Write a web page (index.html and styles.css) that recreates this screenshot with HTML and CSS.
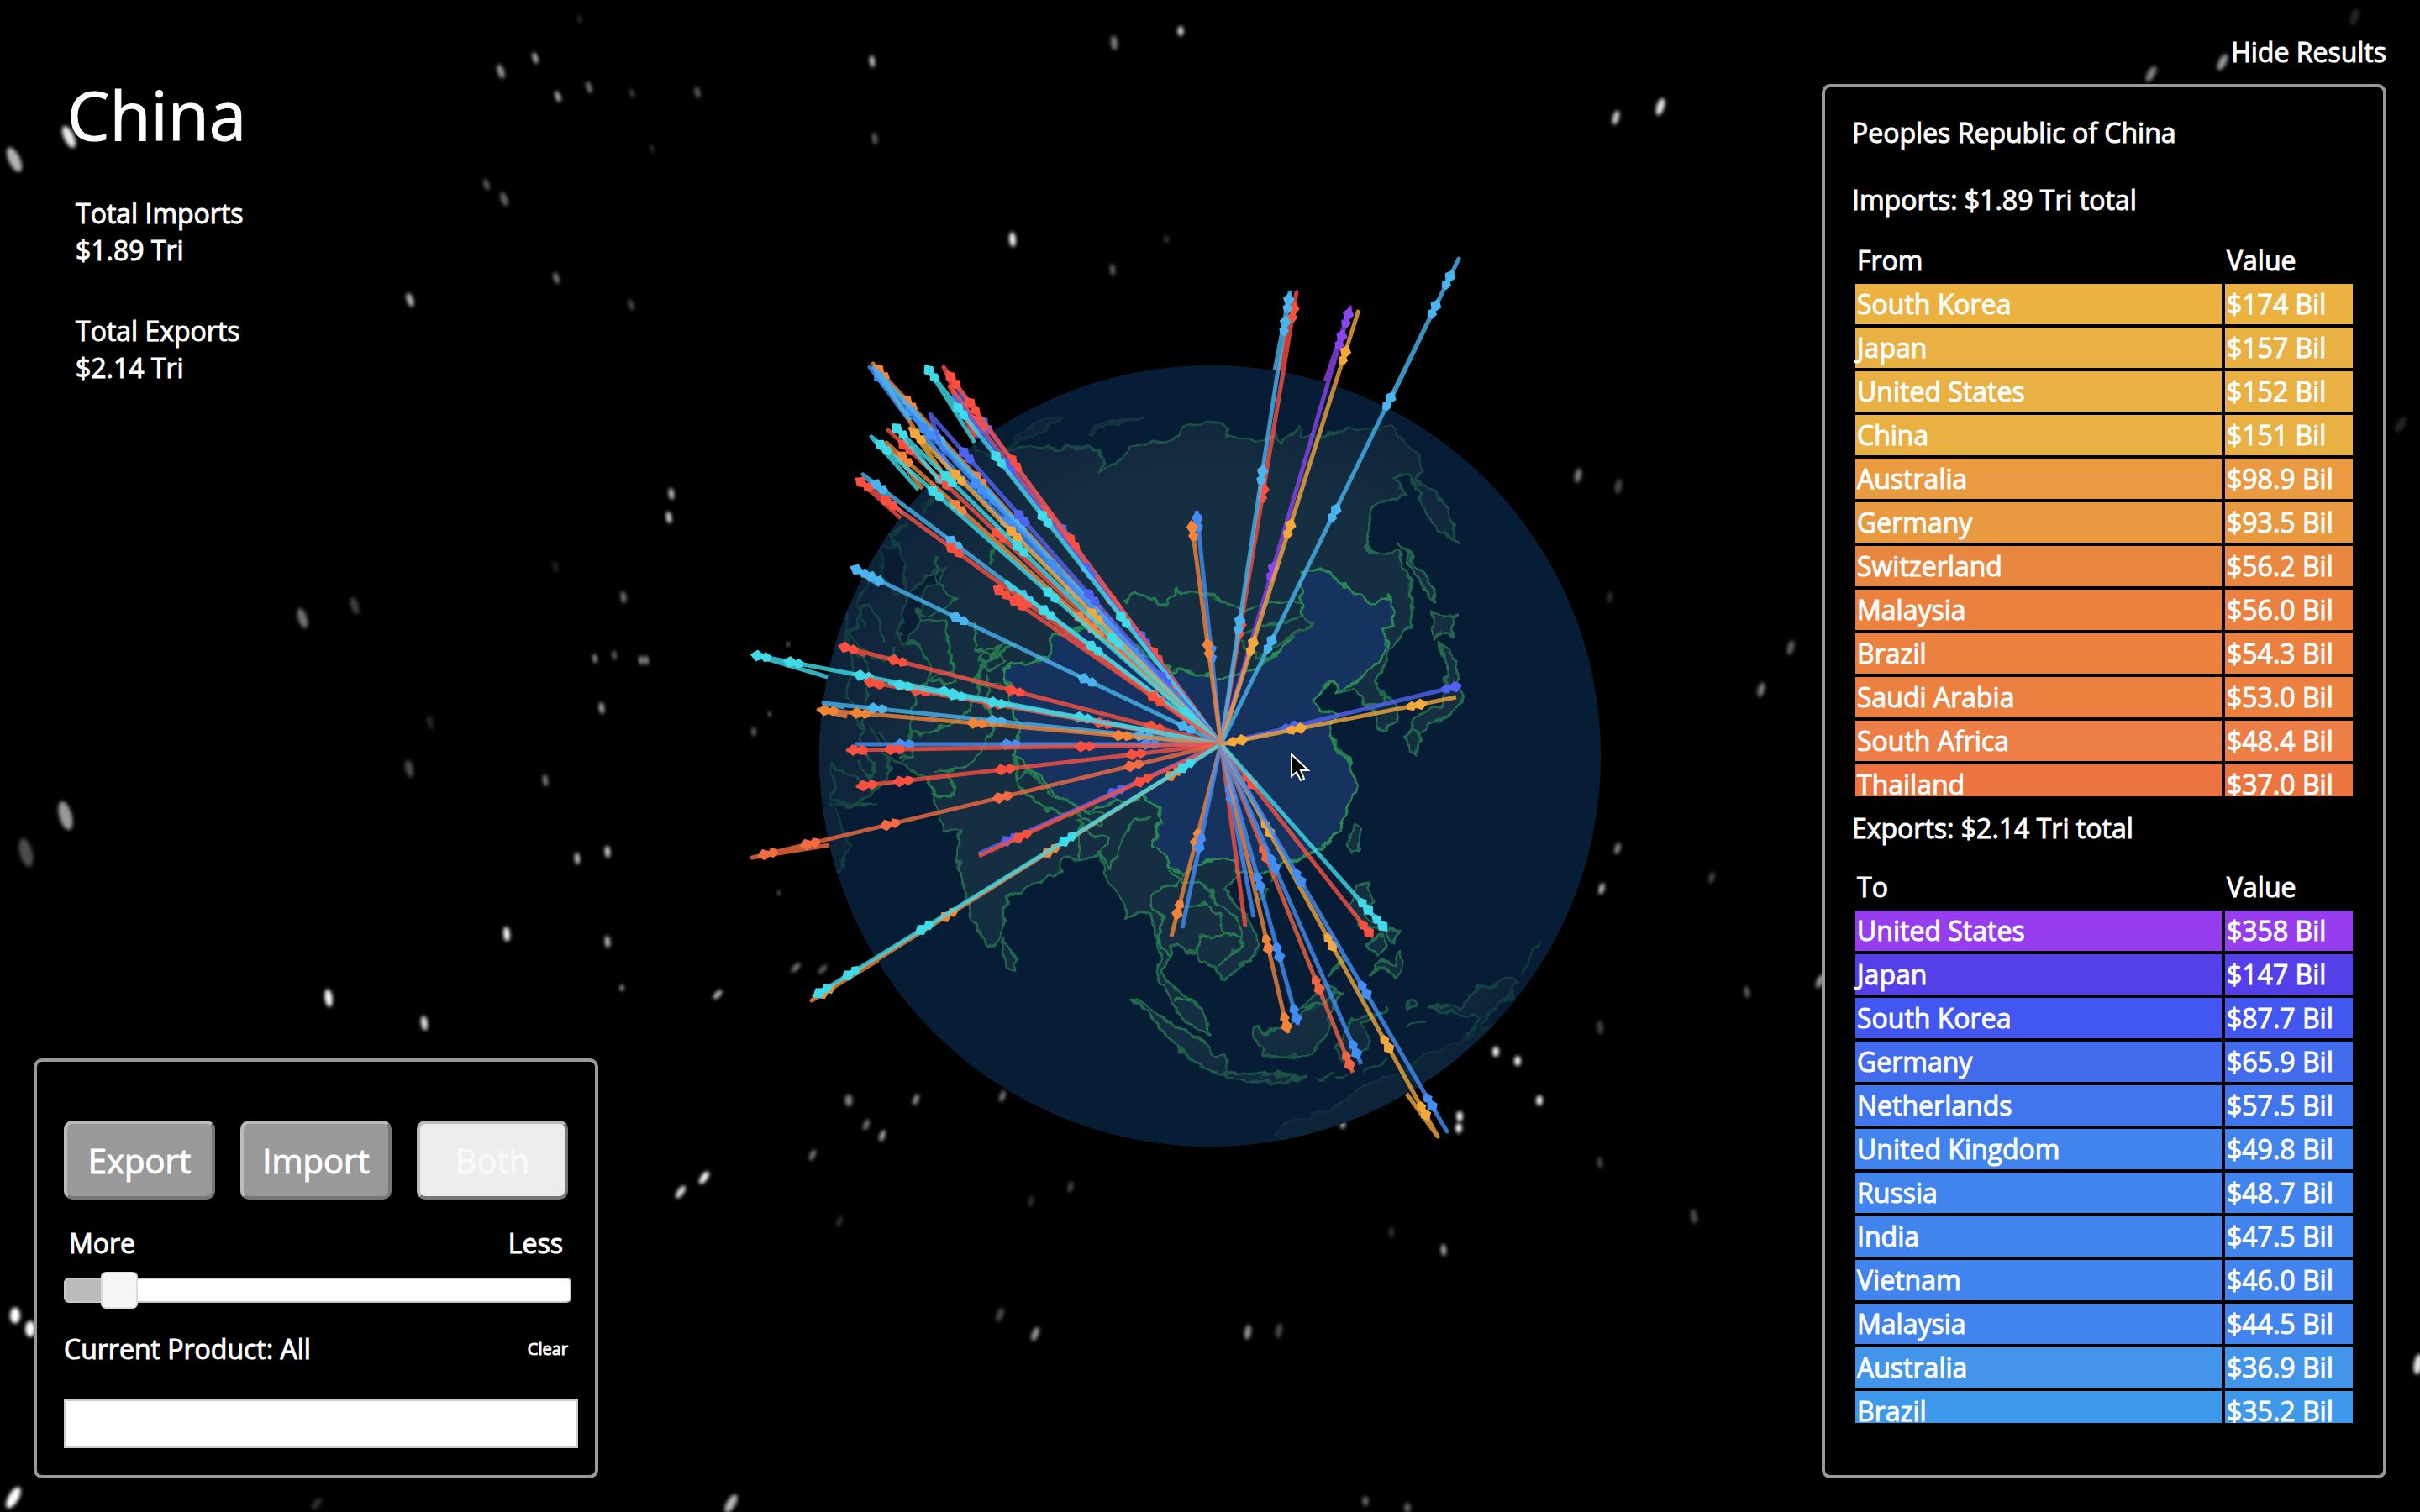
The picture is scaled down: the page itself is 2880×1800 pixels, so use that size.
FILE: index.html
```html
<!DOCTYPE html>
<html lang="en">
<head>
<meta charset="utf-8">
<meta name="viewport" content="width=device-width, initial-scale=1">
<title>China - Global Trade</title>
<link rel="stylesheet" href="styles.css">
</head>
<body>
<svg class="scene" viewBox="0 0 2880 1800" preserveAspectRatio="xMidYMid slice" aria-hidden="true">
  <defs>
    <clipPath id="disc"><circle cx="1440" cy="900" r="465"/></clipPath>
    <filter id="glow" x="-50%" y="-50%" width="200%" height="200%"><feGaussianBlur stdDeviation="2"/></filter>
    <filter id="rugged" filterUnits="userSpaceOnUse" x="960" y="420" width="960" height="960"><feTurbulence type="fractalNoise" baseFrequency="0.06" numOctaves="2" seed="4"/><feDisplacementMap in="SourceGraphic" scale="14" xChannelSelector="R" yChannelSelector="G"/></filter>
    <radialGradient id="haze"><stop offset="0.7" stop-color="#071d35" stop-opacity="0"/><stop offset="1" stop-color="#071d35" stop-opacity="0.7"/></radialGradient>
  </defs>
  <g id="stars" class="stars"></g>
  <circle class="ocean" cx="1440" cy="900" r="465"/>
  <g clip-path="url(#disc)">
   <g class="map">
    <!-- Eurasia -->
    <path class="land" d="M960 1060L1000 1040L1010 1005L990 955L1017 958L1038 945L1060 915L1048 877L1072 913L1104 923L1112 955L1126 987L1141 988L1141 1030L1152 1073L1174 1128L1193 1120L1197 1067L1213 1063L1261 1037L1265 1023L1298 1023L1309 1015L1320 1050L1336 1073L1340 1095L1356 1090L1371 1087L1376 1110L1381 1133L1377 1170L1395 1187L1403 1210L1425 1226L1441 1230L1430 1203L1415 1190L1390 1172L1385 1155L1395 1127L1407 1123L1412 1132L1423 1133L1430 1145L1448 1153L1454 1168L1496 1137L1496 1113L1482 1090L1458 1060L1474 1040L1510 1040L1512 1050L1518 1035L1537 1025L1573 1010L1593 990L1615 937L1608 910L1596 892L1581 875L1582 869L1593 850L1573 844L1560 835L1575 822L1587 808L1592 812L1590 827L1613 822L1622 828L1620 838L1635 846L1643 871L1662 860L1660 845L1653 831L1637 812L1647 795L1653 774L1678 747L1681 720L1680 697L1662 657L1643 657L1625 651L1632 605L1650 595L1672 590L1664 575L1660 567L1675 563L1688 578L1707 583L1722 605L1733 645L1717 636L1700 615L1688 590L1680 571L1695 563L1690 540L1673 529L1653 506L1627 510L1590 515L1550 520L1543 508L1527 530L1517 517L1490 525L1457 519L1460 508L1443 502L1410 510L1395 524L1370 527L1345 530L1330 550L1308 563L1316 545L1307 533L1260 533L1212 532L1190 540L1160 537L1130 480L940 620L920 900Z"/>
    <path class="land faint" d="M1200 532C1215 508 1240 497 1262 496L1240 515ZM1294 517C1310 500 1335 497 1360 500C1330 500 1310 508 1300 520Z"/>
    <!-- inland seas -->
    <path class="water" d="M1088 700L1102 683L1124 680L1120 692L1102 700L1097 726L1087 755L1075 768L1067 752L1075 725ZM1050 650L1072 650L1076 700L1066 710L1050 690ZM1037 863L1060 886L1080 905L1071 913L1050 895Z"/>
    <!-- China -->
    <path class="land china" d="M1195 797L1212 788L1247 783L1253 757L1290 748L1335 760L1365 780L1393 800L1420 800L1453 807L1493 797L1522 777L1537 758L1550 735L1548 715L1550 682L1577 676L1590 688L1607 707L1620 712L1637 722L1653 710L1657 745L1645 747L1652 770L1640 785L1613 814L1590 827L1592 812L1587 808L1575 822L1560 835L1573 844L1593 850L1582 869L1581 875L1608 910L1615 937L1593 990L1573 1010L1537 1025L1510 1040L1474 1040L1466 1027L1452 1020L1430 1027L1411 1040L1400 1035L1391 1030L1385 1015L1373 1010L1375 990L1384 977L1380 962L1359 948L1345 955L1324 953L1300 965L1280 963L1255 943L1226 917L1209 900L1215 863L1202 840L1200 815Z"/>
    <path class="land" d="M1474 760L1500 745L1527 740L1550 735L1560 745L1537 758L1515 773L1493 785Z"/>
    <!-- borders -->
    <g class="border">
      <path d="M1180 673L1183 655L1200 645L1225 660L1250 668M1337 715L1355 708L1388 722L1400 700L1430 708L1460 718L1480 728L1512 718L1550 716M1115 660L1113 690L1138 710L1128 722L1102 735M1100 735L1090 725L1095 740L1125 740L1132 780L1136 810L1110 812M1160 740L1161 770L1180 783L1195 765L1205 768L1170 790L1160 815L1192 812M1172 775L1188 770L1195 790L1180 797L1165 785Z"/>
      <path d="M1065 770L1052 790L1025 770L1010 755L1035 720L1045 740L1050 765M1033 720L1005 770L1035 790L1028 860L1025 890L1040 910L1035 930M1080 765L1098 772L1106 800L1103 815L1090 825L1083 870L1095 877L1110 870L1145 855L1165 820L1166 790M1085 820L1130 800L1150 808L1177 818L1175 840L1185 860L1172 890L1145 915L1112 920M1083 870L1088 900L1072 905M1106 922L1108 945L1120 950L1132 948L1134 935L1128 918M1175 800L1178 835L1200 845M1065 930L1040 940L1022 905M1045 960L1015 958L992 950L990 905L1005 925L1020 925L1025 940"/>
      <path d="M1209 900L1212 935L1240 960L1270 972L1280 965M1213 925L1223 918L1250 945L1283 962L1300 970L1318 970L1310 980L1288 975L1283 965M1283 975L1288 990L1283 1005L1285 1023M1283 985L1300 995L1320 995L1318 1005L1308 1010L1322 1035L1334 1005L1350 975L1371 972M1391 1035L1405 1045L1400 1058L1382 1055L1370 1072L1383 1100L1378 1115L1392 1140M1411 1040L1408 1052L1425 1050L1440 1060L1445 1075L1470 1090L1478 1113L1478 1125L1462 1138L1450 1150M1411 1078L1435 1075L1450 1090L1457 1112L1430 1115L1423 1133M1457 1112L1478 1115M1620 838L1645 837L1652 828M1400 1190L1418 1192"/>
      <path d="M1025 870L1010 830L1015 790L1000 700L1040 650M1062 640L1080 620L1055 640L1075 655M1095 605L1120 585L1100 610M1040 680L1022 720L1030 745"/>
    </g>
    <!-- islands -->
    <path class="land" d="M1197 1121L1211 1142L1209 1154L1197 1153L1191 1135Z"/>
    <path class="land" d="M1613 982L1620 985L1617 1010L1611 1018L1603 1005ZM1495 1062L1512 1058L1508 1070L1494 1072Z"/>
    <path class="land" d="M1613 1055L1630 1054L1632 1075L1622 1090L1645 1103L1640 1108L1618 1103L1612 1088L1606 1080ZM1655 1105L1664 1108L1658 1122L1650 1112ZM1628 1120L1645 1115L1650 1125L1638 1140ZM1630 1160L1645 1143L1660 1148L1665 1130L1672 1145L1668 1160L1658 1165L1648 1153L1636 1155ZM1598 1140L1580 1160L1592 1152Z"/>
    <path class="land" d="M1493 1225L1498 1223L1502 1230L1530 1225L1555 1205L1570 1190L1598 1182L1590 1195L1582 1210L1577 1230L1562 1255L1505 1257L1502 1245L1492 1238Z"/>
    <path class="land" d="M1547 1200L1565 1185L1575 1172L1590 1180L1575 1195L1556 1200Z"/>
    <path class="land" d="M1346 1190L1362 1195L1395 1220L1415 1230L1435 1240L1445 1255L1460 1258L1460 1280L1440 1275L1410 1255L1390 1235L1370 1210Z"/>
    <path class="land" d="M1455 1277L1475 1276L1500 1281L1520 1280L1553 1283L1530 1287L1490 1287L1460 1283ZM1567 1284L1585 1278L1572 1284ZM1588 1283L1602 1281ZM1625 1275L1650 1262L1632 1273ZM1675 1221L1697 1214ZM1700 1200L1735 1198L1760 1178L1800 1162L1806 1170L1795 1190L1770 1205L1760 1235L1735 1260L1725 1262L1745 1240L1760 1210L1735 1205L1720 1205ZM1675 1190L1682 1187L1685 1195L1678 1203ZM1610 1212L1640 1208L1650 1200L1620 1220L1628 1240L1620 1258L1612 1245L1605 1250L1600 1265L1592 1245L1600 1230ZM1815 1155L1833 1122Z"/>
    <path class="land faint" d="M1518 1352L1535 1335L1590 1320L1620 1292L1670 1275L1700 1255L1724 1246L1790 1215L1790 1270L1660 1345L1540 1362Z"/>
    <path class="land" d="M1663 647L1675 660L1695 683L1705 700L1708 716L1700 708L1688 690L1672 660ZM1707 729L1715 733L1733 733L1733 742L1727 756L1713 753L1708 765L1706 748ZM1715 767L1725 770L1733 792L1735 815L1740 835L1725 850L1705 862L1685 870L1680 868L1690 848L1712 842L1720 830L1722 800ZM1671 875L1682 868L1690 880L1685 899L1675 885Z"/>
   </g>
  </g>
  <circle cx="1440" cy="900" r="465" fill="url(#haze)"/>
  <g id="arcs" class="arcs"></g>
  <path class="pointer" d="M1537 898V924L1543 919L1548 929L1552 927L1548 917H1557Z"/>
</svg>

<div class="layout">
  <main class="left">
    <header class="summary">
      <h1>China</h1>
      <dl>
        <div><dt>Total Imports</dt><dd>$1.89 Tri</dd></div>
        <div><dt>Total Exports</dt><dd>$2.14 Tri</dd></div>
      </dl>
    </header>
    <form class="panel controls">
      <div class="modes">
        <button type="button">Export</button>
        <button type="button">Import</button>
        <button type="button" class="active" aria-pressed="true">Both</button>
      </div>
      <div class="range-labels"><label for="amount">More</label><span>Less</span></div>
      <input class="slider" id="amount" type="range" min="0" max="40" value="3">
      <div class="product"><label for="product">Current Product: All</label><button type="reset" class="plain clear">Clear</button></div>
      <input class="search" id="product" type="text">
    </form>
  </main>

  <aside class="right">
    <button type="button" class="plain hide">Hide Results</button>
    <section class="panel results">
      <h2>Peoples Republic of China</h2>
      <h3>Imports: $1.89 Tri total</h3>
      <div class="list">
        <table>
          <thead><tr><th>From</th><th>Value</th></tr></thead>
          <tbody class="imports">
            <tr><td>South Korea</td><td>$174 Bil</td></tr>
            <tr><td>Japan</td><td>$157 Bil</td></tr>
            <tr><td>United States</td><td>$152 Bil</td></tr>
            <tr><td>China</td><td>$151 Bil</td></tr>
            <tr><td>Australia</td><td>$98.9 Bil</td></tr>
            <tr><td>Germany</td><td>$93.5 Bil</td></tr>
            <tr><td>Switzerland</td><td>$56.2 Bil</td></tr>
            <tr><td>Malaysia</td><td>$56.0 Bil</td></tr>
            <tr><td>Brazil</td><td>$54.3 Bil</td></tr>
            <tr><td>Saudi Arabia</td><td>$53.0 Bil</td></tr>
            <tr><td>South Africa</td><td>$48.4 Bil</td></tr>
            <tr><td>Thailand</td><td>$37.0 Bil</td></tr>
          </tbody>
        </table>
      </div>
      <h3 class="second">Exports: $2.14 Tri total</h3>
      <div class="list">
        <table>
          <thead><tr><th>To</th><th>Value</th></tr></thead>
          <tbody class="exports">
            <tr><td>United States</td><td>$358 Bil</td></tr>
            <tr><td>Japan</td><td>$147 Bil</td></tr>
            <tr><td>South Korea</td><td>$87.7 Bil</td></tr>
            <tr><td>Germany</td><td>$65.9 Bil</td></tr>
            <tr><td>Netherlands</td><td>$57.5 Bil</td></tr>
            <tr><td>United Kingdom</td><td>$49.8 Bil</td></tr>
            <tr><td>Russia</td><td>$48.7 Bil</td></tr>
            <tr><td>India</td><td>$47.5 Bil</td></tr>
            <tr><td>Vietnam</td><td>$46.0 Bil</td></tr>
            <tr><td>Malaysia</td><td>$44.5 Bil</td></tr>
            <tr><td>Australia</td><td>$36.9 Bil</td></tr>
            <tr><td>Brazil</td><td>$35.2 Bil</td></tr>
          </tbody>
        </table>
      </div>
    </section>
  </aside>
</div>
<script src="scene.js"></script>
</body>
</html>
```
FILE: styles.css
```css
* {
  box-sizing: border-box;
}

body {
  margin: 0;
  background: #000;
  color: #fff;
  font: 400 32px/44px "Open Sans", "Noto Sans", sans-serif;
  -webkit-text-stroke: 1px currentColor;
}

h1, h2, h3, dl, dd {
  margin: 0;
  font: inherit;
}

/* Scene behind the interface */
.scene {
  position: absolute;
  inset: 0;
  width: 100%;
  height: 100%;
}

.stars ellipse {
  fill: #fff;
  filter: url(#glow);
}

.ocean { fill: #071d35; }

.map { filter: url(#rugged); }

.land {
  fill: #122e43;
  stroke: #236b4d;
  stroke-width: 3;
  stroke-linejoin: round;
}

.land.china {
  fill: #14335e;
  stroke: #2a8754;
}

.land.faint { stroke: #1b4a48; }

.water {
  fill: #071d35;
  stroke: #205f4a;
  stroke-width: 3;
}

.border path {
  fill: none;
  stroke: #26774f;
  stroke-width: 3;
  stroke-linejoin: round;
}

.arcs polyline {
  fill: none;
  stroke-width: 5;
  stroke-linejoin: round;
  opacity: 0.8;
}

.pointer {
  fill: #000;
  stroke: #fff;
  stroke-width: 2;
}

/* Interface */
.layout {
  position: relative;
  display: grid;
  grid-template-columns: minmax(560px, 24%) minmax(560px, 24%);
  justify-content: space-between;
  height: 100vh;
  min-height: 1200px;
  padding: 40px;
}

.left, .right {
  display: flex;
  flex-direction: column;
  min-height: 0;
}

.left { justify-content: space-between; }
.right { gap: 16px; }

.summary { padding: 48px 0 0 40px; }

.summary h1 {
  font-size: 80px;
  line-height: 96px;
}

.summary dl {
  display: grid;
  gap: 52px;
  padding: 48px 0 0 10px;
}

.panel {
  border: 4px solid #999;
  border-radius: 10px;
  background: #000;
}

button {
  color: #fff;
  font-family: inherit;
}

.plain {
  padding: 0;
  border: 0;
  background: none;
}

.controls {
  display: flex;
  flex-direction: column;
  padding: 70px 32px 32px;
}

.modes {
  display: flex;
  gap: 30px;
}

.modes button {
  flex: 1;
  height: 94px;
  padding: 0;
  border: 4px solid;
  border-color: #bbb #777 #777 #bbb;
  border-radius: 10px;
  background: #999;
  font-size: 40px;
}

.modes .active {
  background: #ededed;
  color: #f8f8f8;
}

.range-labels, .product {
  display: flex;
  justify-content: space-between;
}

.range-labels { padding: 30px 6px 12px; }
.product { padding: 26px 0 38px; }

.clear {
  font-size: 20px;
  line-height: 40px;
}

.slider {
  appearance: none;
  width: auto;
  height: 44px;
  margin: 0 -4px 0 0;
  background: none;
}

.slider::-webkit-slider-runnable-track {
  height: 30px;
  border: 2px solid #c8c8c8;
  border-radius: 6px;
  background: linear-gradient(90deg, #bbb 64px, #fff 64px);
}

.slider::-webkit-slider-thumb {
  appearance: none;
  width: 44px;
  height: 44px;
  margin-top: -9px;
  border: 2px solid #ddd;
  border-radius: 6px;
  background: #f6f6f6;
}

.search {
  height: 58px;
  margin-right: -12px;
  padding: 0 8px;
  border: 2px solid #ccc;
  background: #fff;
  font: inherit;
}

.hide {
  align-self: flex-end;
  font-size: 32px;
  line-height: 44px;
}

.results {
  display: flex;
  flex: 1;
  flex-direction: column;
  min-height: 0;
  padding: 32px 32px 62px;
}

.results h3 { margin: 36px 0 22px; }
.results .second { margin: 16px 0 20px; }

.list {
  flex: 1;
  min-height: 0;
  overflow-y: auto;
  scrollbar-width: none;
}

table {
  width: 100%;
  table-layout: fixed;
  border-spacing: 4px;
}

th, td {
  height: 48px;
  padding: 2px;
  font-weight: 400;
  text-align: left;
}

th:last-child { width: 152px; }

.imports tr:nth-child(1) { --row: #ecb240; }
.imports tr:nth-child(-n+4):not(:first-child) { --row: #e9b044; }
.imports tr:nth-child(5) { --row: #ea9b42; }
.imports tr:nth-child(6) { --row: #e9993f; }
.imports tr:nth-child(7) { --row: #e98640; }
.imports tr:nth-child(n+8) { --row: #ec803e; }
.imports tr:nth-child(11) { --row: #ec7e46; }
.imports tr:nth-child(12) { --row: #ed743f; }
.exports tr:nth-child(1) { --row: #963eed; }
.exports tr:nth-child(2) { --row: #5440e9; }
.exports tr:nth-child(3) { --row: #4256f0; }
.exports tr:nth-child(4) { --row: #436bee; }
.exports tr:nth-child(5) { --row: #4175ee; }
.exports tr:nth-child(n+6) { --row: #4284ee; }
.exports tr:nth-child(11) { --row: #4395ea; }
.exports tr:nth-child(12) { --row: #3f99ea; }
td { background: var(--row); }
```
FILE: scene.js
```js
const NS = "http://www.w3.org/2000/svg";
const add = (parent, name, attrs) => {
  const el = document.createElementNS(NS, name);
  for (const key in attrs) el.setAttribute(key, attrs[key]);
  parent.appendChild(el);
};

// x, y, radius, tilt in degrees, brightness
const stars = [
  [690,23,3,-15,.2],[637,69,4,-18,.7],[596,85,5,-18,.6],[664,115,4,-18,.7],[701,104,4,-18,.5],[752,111,3,-18,.3],
  [776,177,3,-18,.2],[579,220,4,-18,.4],[600,237,5,-18,.4],[662,331,4,-18,.5],[488,357,5,-18,.7],[751,363,4,-18,.3],
  [82,163,8,-25,.9],[17,190,9,-25,.7],[830,110,4,-12,.4],[1038,73,4,-8,.8],[1041,165,4,-8,.4],[1326,51,5,-5,.5],
  [1405,37,5,0,.8],[1205,285,5,-5,1],[1324,321,4,-5,.4],[1388,285,4,0,.2],[1923,140,5,15,.8],[1976,127,6,18,.9],
  [1878,566,5,10,.5],[1926,579,5,10,.3],[1916,711,4,10,.2],[2645,74,6,28,.6],[2560,88,6,28,.5],[2802,20,6,20,.15],
  [2096,821,5,15,.5],[2131,771,5,15,.4],[1925,1010,4,15,.6],[1906,1058,4,15,.8],[2037,1045,4,15,.3],[2079,1181,4,-10,.4],
  [2166,1168,5,25,.6],[799,588,4,-8,.8],[796,616,4,-8,.9],[661,675,4,-10,.15],[742,711,4,-8,.5],[360,736,7,-18,.45],
  [422,721,6,-18,.25],[708,784,3,-10,.7],[731,780,3,-10,.5],[763,786,3,-8,.7],[769,786,3,-8,.7],[938,767,2,0,.8],
  [716,843,4,-8,.7],[512,860,5,-12,.15],[487,915,6,-12,.3],[649,929,4,-8,.5],[916,850,2,-5,.6],[897,871,3,-5,.5],
  [78,971,10,-15,.6],[31,1015,10,-15,.3],[687,1022,4,-5,.8],[723,1014,4,-5,.9],[927,1063,2,0,.7],[603,1112,5,-5,1],
  [723,1121,4,-5,.8],[391,1188,6,-8,1],[505,1218,5,-8,.9],[740,1176,3,0,.7],[854,1184,4,45,.8],[947,1152,4,45,.5],
  [979,1154,4,45,.4],[1010,1310,6,0,.5],[1090,1309,4,20,.6],[1193,1305,4,20,.5],[1031,1339,4,20,.5],[1050,1352,4,20,.7],
  [967,1375,4,25,.5],[838,1402,5,35,1],[810,1419,5,35,.9],[999,1454,4,20,.2],[1274,1413,4,12,.3],[1227,1430,4,10,.2],
  [1190,1565,5,20,.3],[1232,1588,5,22,.6],[1485,1586,5,8,.6],[1522,1584,5,8,.3],[1656,1467,4,-5,.2],[1718,1488,4,-5,.7],
  [2016,1448,5,-10,.3],[1904,1384,4,-8,.3],[1904,1223,5,-5,.25],[1780,1252,5,0,1],[1806,1263,5,0,1],[1832,1310,5,0,1],
  [1737,1329,5,0,1],[1736,1343,5,0,1],[1598,1339,4,0,.7],[870,1790,7,30,.7],[1625,1787,5,0,.4],[1675,1795,5,0,.4],
  [18,1566,8,0,1],[36,1582,8,0,1],[16,1783,8,30,1],[377,1790,5,40,.2],[2878,1624,7,10,.9],[2857,505,6,30,.15]
];
const sky = document.getElementById("stars");
for (const [x, y, r, tilt, light] of stars) {
  add(sky, "ellipse", { cx: x, cy: y, rx: r * 0.75, ry: tilt ? r * 1.75 : r * 1.2, opacity: light, transform: `rotate(${tilt} ${x} ${y})` });
}

// colour, far point, arrow positions along the arc (0 = hub, 1 = far point), optional landing point
const HUB = [1453, 886];
const red = "#fb5040", orange = "#f48438", cyan = "#3fdbe8", sky2 = "#49b4ee", blue = "#438ef5", violet = "#5262f0", amber = "#f2a83a", purple = "#8b45ee";
const arcs = [
  [violet, 1140, 462, [.3, .6, .9], 1165, 522],
  [red, 1123, 437, [.24, .54, .75, .9, .97], 1160, 522],
  [red, 1130, 460, [.4, .65, .9], 1162, 518],
  [violet, 1134, 470, [.5, .8]],
  [cyan, 1107, 443, [.34, .61, .77, .9, 1], 1160, 527],
  [orange, 1039, 433, [.14, .35, .7, .9, .98], 1088, 510],
  [blue, 1035, 437, [.18, .4, .66, .88, .97], 1080, 498],
  [sky2, 1040, 438, [.32, .59, .82], 1084, 500],
  [violet, 1107, 493, [.2, .45, .69, .88], 1127, 553],
  [blue, 1090, 500, [.28, .55, .8, .97], 1130, 560],
  [blue, 1098, 520, [.35, .5, .72]],
  [amber, 1083, 510, [.41, .67, .85, .98], 1120, 560],
  [red, 1057, 512, [.3, .67, .84, .95], 1122, 573],
  [cyan, 1065, 508, [.33, .62, .84, .99], 1120, 575],
  [orange, 1055, 527, [.38, .42, .79, .95], 1098, 582],
  [cyan, 1037, 520, [.1, .49, .82, .97], 1093, 583],
  [sky2, 1027, 565, [.55, .75, .96], 1075, 612],
  [red, 1022, 572, [.18, .55, .74, .92, .99], 1072, 617],
  [cyan, 1198, 693, [.6, .82], 1205, 703],
  [red, 1188, 702, [.3, .92, .99]],
  [sky2, 1017, 677, [.1, .37, .72, .95, .99], 1047, 697],
  [red, 1003, 770, [.18, .55, .86, .99], 1030, 780],
  [cyan, 898, 780, [.3, .59, .77, .92, .99], 985, 806],
  [red, 1034, 812, [.34, .65, .86, .99], 1050, 820],
  [cyan, 1057, 813, [.68, .8, .96]],
  [sky2, 980, 837, [.2, .57, .87], 1005, 842],
  [orange, 974, 845, [.25, .61, .9, .98], 1008, 853],
  [blue, 1017, 886, [.2, .58, .87]],
  [red, 1009, 893, [.37, .88, .98], 1032, 897],
  [red, 1021, 936, [.24, .6, .88, .98], 1041, 933],
  ["#f36b42", 895, 1021, [.19, .47, .71, .88, .97], 987, 1006],
  [violet, 1165, 1016, [.44, .88]],
  [red, 1165, 1019, [.33, .83]],
  [orange, 966, 1191, [.12, .42, .67, .97], 1045, 1143],
  [cyan, 967, 1187, [.09, .38, .73, .91, .98]],
  [orange, 1394, 1115, [.5, .87]],
  [blue, 1407, 1105, [.55]],
  [red, 1482, 1103, []],
  [blue, 1492, 1092, [.3]],
  [orange, 1533, 1230, [.7, .97]],
  [blue, 1545, 1220, [.5, .75, .97]],
  ["#f26440", 1610, 1277, [.34, .74, .97]],
  [blue, 1620, 1267, [.38, .96]],
  [amber, 1711, 1353, [.22, .51, .77, .94], 1674, 1302],
  [blue, 1722, 1347, [.35, .64, .93], 1705, 1318],
  [red, 1633, 1115, [.2, .97]],
  [cyan, 1646, 1103, [.9, .99]],
  [red, 1543, 348, [.26, .56, .96], 1522, 441],
  [sky2, 1535, 348, [.27, .6, .93, .98], 1517, 441],
  [purple, 1607, 366, [.4, .93, .98], 1577, 454],
  [amber, 1617, 369, [.23, .5, .9]],
  [sky2, 1736, 308, [.21, .48, .71, .9, .96], 1652, 482],
  [violet, 1738, 816, [.3, .97]],
  [amber, 1733, 830, [.08, .33, .84]],
  [blue, 1424, 608, [.4, .96]],
  [orange, 1418, 622, [.44, .97]]
];
const sheet = document.getElementById("arcs");
for (const [color, x, y, marks, endX, endY] of arcs) {
  const landing = endX ? ` ${endX},${endY}` : "";
  add(sheet, "polyline", { points: `${HUB} ${x},${y}${landing}`, stroke: color });
  const angle = Math.atan2(y - HUB[1], x - HUB[0]) * 180 / Math.PI;
  for (const t of marks) {
    const mx = HUB[0] + (x - HUB[0]) * t;
    const my = HUB[1] + (y - HUB[1]) * t;
    add(sheet, "path", { d: "M-14-3L-7-6L-4-3L3-7L11 0L3 7L-4 3L-7 6L-14 3Z", fill: color, transform: `translate(${mx} ${my}) rotate(${angle})` });
  }
}
```
